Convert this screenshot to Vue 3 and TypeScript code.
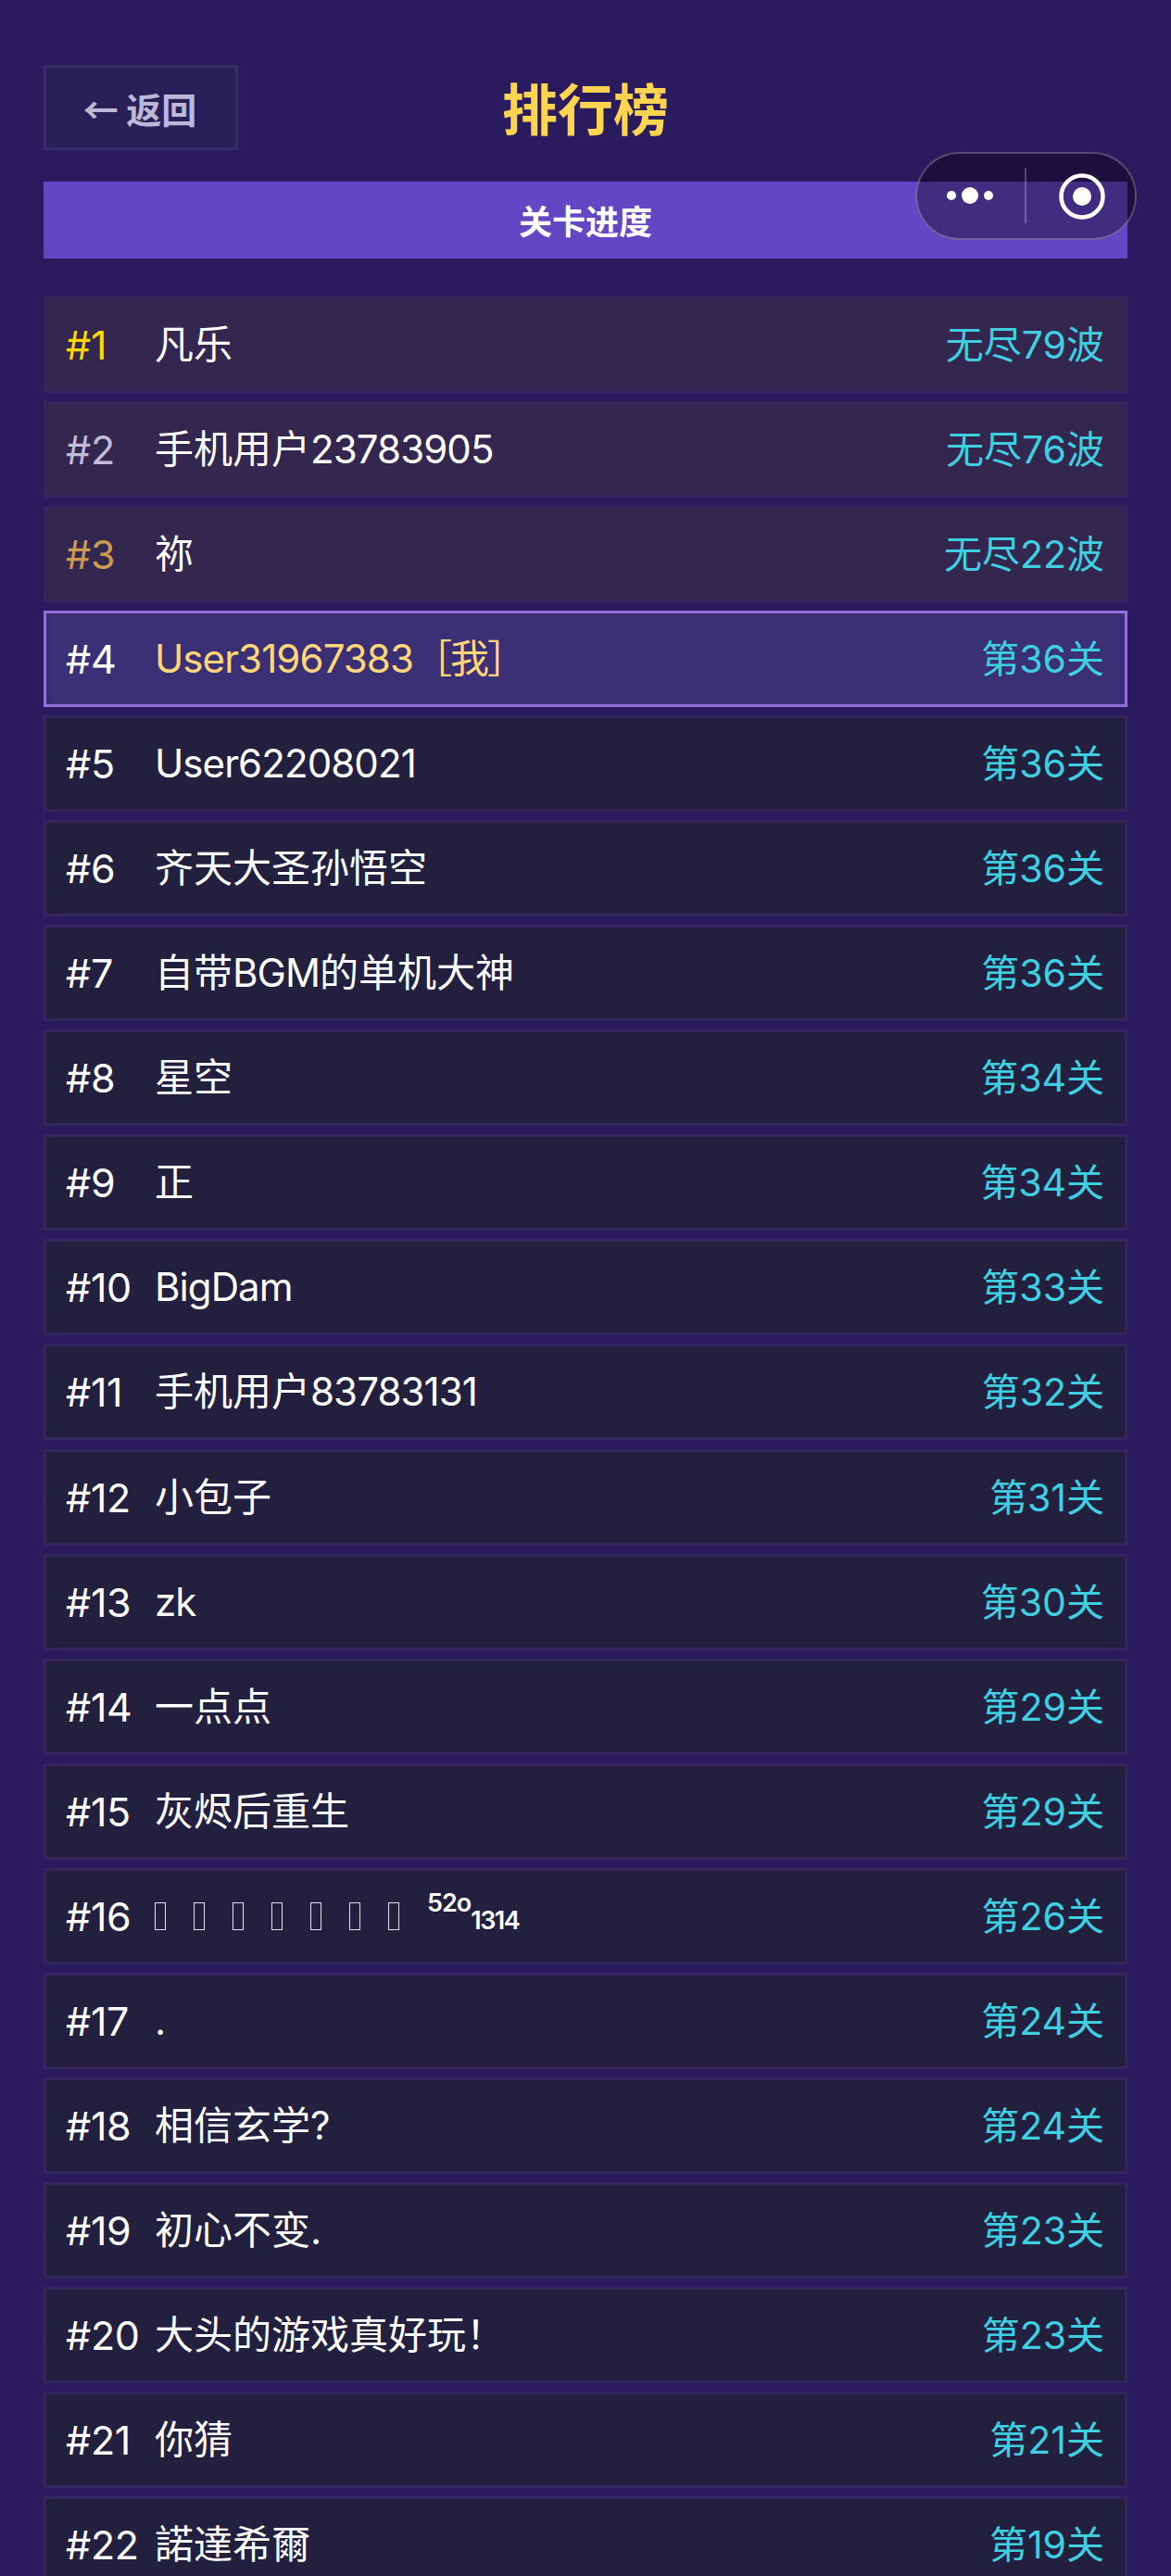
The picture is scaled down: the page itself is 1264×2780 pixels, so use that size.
<script setup lang="ts">
interface Run { text: string; latin: boolean }
interface Row { rank: number; runs: Run[]; score: string; tier?: string; me?: boolean; special?: boolean }
const names: [string, string][] = [
  ['凡乐', '无尽79波'], ['手机用户23783905', '无尽76波'], ['祢', '无尽22波'],
  ['User31967383［我］', '第36关'], ['User62208021', '第36关'], ['齐天大圣孙悟空', '第36关'],
  ['自带BGM的单机大神', '第36关'], ['星空', '第34关'], ['正', '第34关'], ['BigDam', '第33关'],
  ['手机用户83783131', '第32关'], ['小包子', '第31关'], ['zk', '第30关'], ['一点点', '第29关'],
  ['灰烬后重生', '第29关'], ['', '第26关'], ['.', '第24关'], ['相信玄学?', '第24关'],
  ['初心不变.', '第23关'], ['大头的游戏真好玩！', '第23关'], ['你猜', '第21关'], ['諾達希爾', '第19关'],
]
function split(name: string): Run[] {
  return (name.match(/[A-Za-z0-9]+|[^A-Za-z0-9]+/g) ?? []).map((text) => ({
    text,
    latin: /^[A-Za-z0-9]/.test(text),
  }))
}
const rows: Row[] = names.map(([name, score], i) => ({
  rank: i + 1,
  runs: split(name),
  score,
  tier: i < 3 ? `top${i + 1}` : undefined,
  me: i === 3,
  special: i === 15,
}))
const boxes = [1, 2, 3, 4, 5, 6, 7]
</script>

<template>
  <div class="page">
    <header class="head">
      <button class="back">← 返回</button>
      <h1 class="title">排行榜</h1>
      <span></span>
    </header>
    <div class="tab">关卡进度</div>
    <ul class="list">
      <li v-for="r in rows" :key="r.rank" class="row" :class="[r.tier ? 'top' : '', r.me ? 'me' : '']">
        <span class="rank" :class="r.tier">#{{ r.rank }}</span>
        <span v-if="r.special" class="name special">
          <i v-for="b in boxes" :key="b" class="tofu"></i><span class="sup">52o</span><span class="sub">1314</span>
        </span>
        <span v-else class="name"><span v-for="(run, k) in r.runs" :key="k" :class="{ latin: run.latin }">{{ run.text }}</span></span>
        <span class="score">{{ r.score }}</span>
      </li>
    </ul>
    <div class="capsule">
      <svg class="dots" width="50" height="18" viewBox="0 0 50 18">
        <circle cx="5" cy="9" r="5" fill="#fff" />
        <circle cx="25" cy="9" r="9" fill="#fff" />
        <circle cx="45" cy="9" r="5" fill="#fff" />
      </svg>
      <span class="sep"></span>
      <svg class="target" width="50" height="50" viewBox="0 0 50 50">
        <circle cx="25" cy="25" r="22.5" fill="none" stroke="#fff" stroke-width="4.5" />
        <circle cx="25" cy="25" r="10" fill="#fff" />
      </svg>
    </div>
  </div>
</template>

<style>
html, body { margin: 0; background: #2a1a5e; }
</style>

<style scoped>
.page {
  position: relative;
  height: 2780px;
  overflow: hidden;
  box-sizing: border-box;
  padding: 70px 47px 0;
  background: #2a1a5e;
  font-family: Inter, "Noto Sans CJK SC", sans-serif;
  color: #fff;
}
.head {
  display: grid;
  grid-template-columns: 1fr auto 1fr;
  align-items: center;
  height: 92px;
}
.back {
  width: 210px;
  height: 92px;
  box-sizing: border-box;
  border: 3px solid #382c68;
  background: #2a2058;
  color: #bdb8d8;
  font: 700 38px "Noto Sans CJK SC", sans-serif;
  padding: 0 2px 0 0;
}
.title {
  margin: 6px 0 0;
  color: #ffd54f;
  font-size: 60px;
  font-weight: 700;
  line-height: 1;
}
.tab {
  margin-top: 34px;
  height: 83px;
  padding-bottom: 2px;
  box-sizing: border-box;
  background: #6247c4;
  display: flex;
  align-items: center;
  justify-content: center;
  font-size: 36px;
  font-weight: 700;
}
.list {
  list-style: none;
  margin: 41px 0 0;
  padding: 0;
  display: flex;
  flex-direction: column;
  gap: 9.05px;
}
.row {
  height: 104px;
  flex: none;
  box-sizing: border-box;
  display: flex;
  align-items: center;
  padding: 0 22px 0 21px;
  background: #231f3f;
  border: 3px solid #33265f;
  font-size: 41px;
  line-height: 56px;
}
.row.top { background: #33264f; }
.row.me { background: #3b3075; border-color: #9370db; }
.rank { width: 96px; flex: none; white-space: nowrap; font-size: 43px; letter-spacing: -0.3px; }
.top1 { color: #ffd700; }
.top2 { color: #c0bcd8; }
.top3 { color: #cd9a4f; }
.name { flex: 1; white-space: nowrap; font-size: 42px; }
.latin { letter-spacing: -0.9px; }
.special { display: flex; align-items: center; }
.me .name { color: #ffd77a; }
.me .name span:last-child { letter-spacing: -2px; }
.score { color: #40cfe0; white-space: nowrap; }
.tofu {
  flex: none;
  width: 12px;
  height: 30px;
  box-sizing: border-box;
  border: 1px solid #e4e4f0;
  margin-right: 30px;
}
.sup { font-size: 27px; font-weight: 600; transform: translateY(-14px); letter-spacing: -1px; }
.sub { font-size: 27px; font-weight: 600; transform: translateY(5px); letter-spacing: -1.5px; }
.capsule {
  position: absolute;
  left: 988px;
  top: 164px;
  width: 239px;
  height: 95px;
  box-sizing: border-box;
  border: 2px solid rgba(255, 255, 255, 0.25);
  border-radius: 48px;
  background: rgba(0, 0, 0, 0.35);
}
.dots { position: absolute; left: 32px; top: 36px; }
.sep { position: absolute; left: 116px; top: 15px; width: 2px; height: 60px; background: rgba(255, 255, 255, 0.25); }
.target { position: absolute; left: 153px; top: 21px; }
</style>
